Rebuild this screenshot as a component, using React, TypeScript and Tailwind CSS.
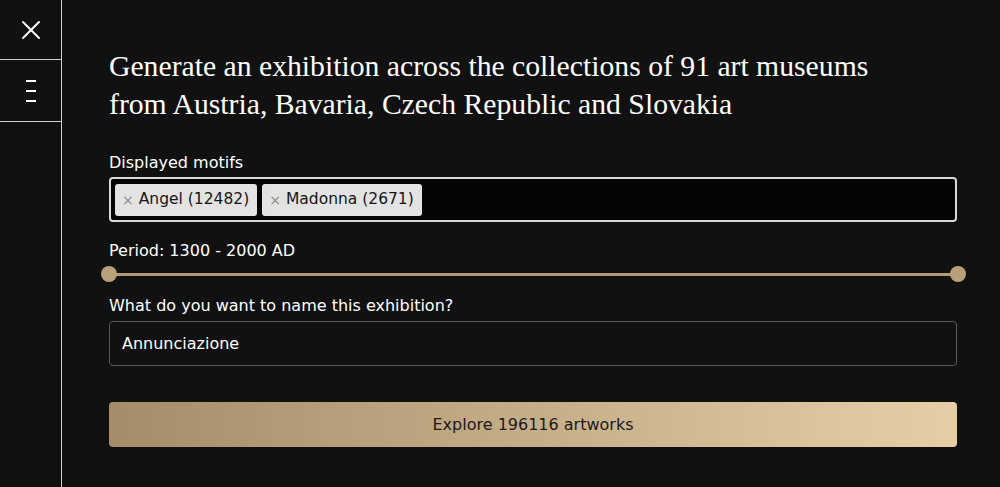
import { X } from 'lucide-react'

const motifs = [
  { name: 'Angel', count: 12482 },
  { name: 'Madonna', count: 2671 },
]

function Sidebar() {
  return (
    <div className="w-[62px] shrink-0 border-r border-[#cfcfcf] flex flex-col">
      <div className="h-[60px] border-b border-[#cfcfcf] flex items-center justify-center">
        <X className="w-[32px] h-[32px] text-white" strokeWidth={1.5} />
      </div>
      <div className="h-[62px] border-b border-[#cfcfcf] flex flex-col items-center justify-center gap-[8px]">
        <span className="block w-[10px] h-[2px] bg-white" />
        <span className="block w-[10px] h-[2px] bg-white" />
        <span className="block w-[10px] h-[2px] bg-white" />
      </div>
    </div>
  )
}

export default function App() {
  return (
    <div
      className="w-[1000px] h-[487px] bg-[#111111] flex overflow-hidden text-white"
      style={{ fontFamily: '"DejaVu Sans", "Open Sans", sans-serif' }}
    >
      <Sidebar />
      <main className="flex-1 pl-[47px] pr-[43px] pt-[47px]">
        <h1 className="text-[29.7px] leading-[38px] text-white font-['Liberation_Serif',serif]">
          Generate an exhibition across the collections of 91 art museums
          <br />
          from Austria, Bavaria, Czech Republic and Slovakia
        </h1>

        <label className="block mt-[28px] text-[16px] leading-[24px]">Displayed motifs</label>
        <div className="mt-[2px] h-[45px] rounded-[4px] border-2 border-[#d8d8d8] bg-[#050505] flex items-center gap-[5px] px-[4px]">
          {motifs.map((m) => (
            <span
              key={m.name}
              className="h-[32px] flex items-center gap-[5px] pl-[7px] pr-[8px] rounded-[3px] bg-[#e3e3e3] text-[#151515] text-[15.5px]"
            >
              <span className="text-[#8a8a8a] text-[14px] leading-none">×</span>
              {m.name} ({m.count})
            </span>
          ))}
        </div>

        <div className="mt-[17px] text-[16px] leading-[24px]">Period: 1300 - 2000 AD</div>
        <div className="relative mt-[3px] h-[16px] flex items-center">
          <div className="w-full h-[3px] bg-[#b39a74]" />
          <span className="absolute left-[-8px] top-0 w-[16px] h-[16px] rounded-full bg-[#b8a07b]" />
          <span className="absolute right-[-9px] top-0 w-[16px] h-[16px] rounded-full bg-[#b8a07b]" />
        </div>

        <label className="block mt-[12px] text-[16px] leading-[24px]">
          What do you want to name this exhibition?
        </label>
        <div className="mt-[3px] h-[45px] rounded-[4px] border border-[#5a5a5a] bg-[#111111] flex items-center px-[12px] text-[16px]">
          Annunciazione
        </div>

        <button className="mt-[36px] w-full h-[45px] rounded-[4px] bg-gradient-to-r from-[#a68d6a] to-[#e6cfa7] text-[#1a1a1a] text-[16px] flex items-center justify-center">
          Explore 196116 artworks
        </button>
      </main>
    </div>
  )
}
